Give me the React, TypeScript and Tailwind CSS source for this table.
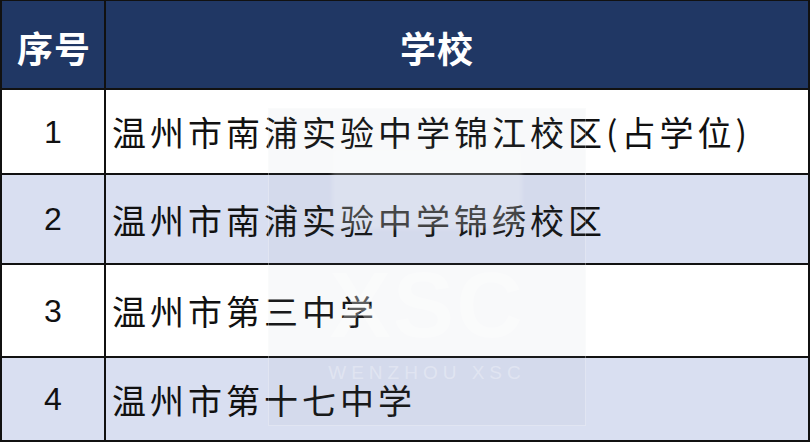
const rows = [
  { no: "1", name: "温州市南浦实验中学锦江校区(占学位)", h: "h-[85px]", bg: "bg-white" },
  { no: "2", name: "温州市南浦实验中学锦绣校区", h: "h-[90px]", bg: "bg-[#d9dff1]" },
  { no: "3", name: "温州市第三中学", h: "h-[93px]", bg: "bg-white" },
  { no: "4", name: "温州市第十七中学", h: "h-[84px]", bg: "bg-[#d9dff1]" },
];

const App = () => {
  return (
    <div className="relative w-[811px] h-[445px] bg-white overflow-hidden font-['Liberation_Sans','Noto_Sans_CJK_SC',sans-serif]">
      <div className="w-[810px] border-l-2 border-r-2 border-t border-[#111]">
        <div className="grid grid-cols-[104px_1fr] h-[89px] bg-[#203764] border-b-2 border-[#111] text-white font-bold text-[36px] tracking-[1px] font-['Noto_Sans_CJK_SC',sans-serif]">
          <div className="flex items-center justify-center border-r-2 border-[#111] pl-[2px] pt-[4px]">序号</div>
          <div className="flex items-center justify-center pr-[40px] pt-[4px]">学校</div>
        </div>
        {rows.map((r) => (
          <div key={r.no} className={`grid grid-cols-[104px_1fr] border-b-2 border-[#111] ${r.h} ${r.bg}`}>
            <div className="flex items-center justify-center border-r-2 border-[#111] text-[32px] text-[#111]">
              {r.no}
            </div>
            <div className="flex items-center pl-[6px] text-[34px] tracking-[4px] whitespace-nowrap text-[#111] font-['Noto_Sans_CJK_SC',sans-serif]">
              {r.name}
            </div>
          </div>
        ))}
      </div>

      {/* watermark */}
      <div className="absolute left-[268px] top-[108px] w-[318px] h-[318px] bg-[#8a94a8]/[0.06] border border-white/30 pointer-events-none flex flex-col items-center">
        <div className="mt-[40px] w-[190px] h-[80px] bg-white/20 blur-[2px]" />
        <div className="mt-[30px] text-[92px] leading-none font-black text-white/30 font-['Liberation_Sans',sans-serif] tracking-[2px]">
          XSC
        </div>
        <div className="mt-[12px] text-[19px] leading-none text-white/30 tracking-[5px] font-['Liberation_Sans',sans-serif]">
          WENZHOU XSC
        </div>
      </div>
    </div>
  );
};

export default App;
